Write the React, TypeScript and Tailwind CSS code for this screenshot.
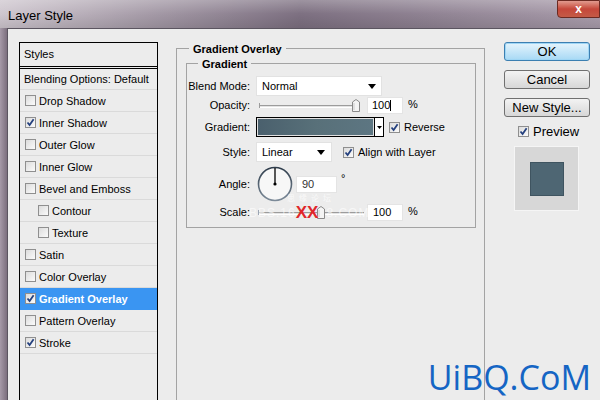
import React from "react";

const F = { fontFamily: '"Liberation Sans", Arial, sans-serif' };

function Check({ checked }: { checked?: boolean }) {
  return (
    <div className="w-[11px] h-[11px] border border-[#8f8f8f] bg-gradient-to-br from-[#dcdcdc] to-[#fbfbfb] flex items-center justify-center shrink-0">
      {checked && (
        <svg width="9" height="9" viewBox="0 0 9 9">
          <path d="M1.5 4.5 L3.6 7 L7.6 1.3" stroke="#24407e" strokeWidth="1.8" fill="none" />
        </svg>
      )}
    </div>
  );
}

function Row({ label, checked, sub, active }: { label: string; checked?: boolean; sub?: boolean; active?: boolean }) {
  return (
    <div
      className={`h-[22px] flex items-center border-b ${active ? "bg-[#3a95f2] border-[#3a95f2] text-white font-bold" : "border-[#dadada] text-black"} ${sub ? "pl-[18px]" : "pl-[5px]"}`}
    >
      <Check checked={checked} />
      <span className="ml-[3px] text-[11px] mt-[1px]">{label}</span>
    </div>
  );
}

function Arrow() {
  return (
    <svg width="8" height="5" viewBox="0 0 8 5">
      <path d="M0 0 H8 L4 5 Z" fill="#000" />
    </svg>
  );
}

function Slider({ w, thumb }: { w: number; thumb: number }) {
  return (
    <div className="relative h-full" style={{ width: w }}>
      <div className="absolute left-[3px] right-[3px] top-1/2 -mt-[1px] h-[3px] border-t border-[#9c9c9c] border-b border-b-white bg-[#e3e3e3]" />
      <div className="absolute left-[3px] top-1/2 -mt-[3px] w-[1px] h-[5px] bg-[#9c9c9c]" />
      <svg className="absolute top-1/2 -mt-[7px]" style={{ left: thumb }} width="8" height="13" viewBox="0 0 8 13">
        <path d="M0.5 3 L4 0.5 L7.5 3 V12.5 H0.5 Z" fill="#f4f4f4" stroke="#8a8a8a" />
        <path d="M2 4 V11" stroke="#ccc" />
      </svg>
    </div>
  );
}

function Btn({ children, primary }: { children: React.ReactNode; primary?: boolean }) {
  return (
    <div
      className={`h-[19px] w-[86px] rounded-[3px] border flex items-center justify-center text-[13px] ${
        primary
          ? "border-[#3c7fb1] bg-gradient-to-b from-[#e5f4fc] to-[#a7d9f5] shadow-[0_0_0_1px_#9fd6f5_inset]"
          : "border-[#707070] bg-gradient-to-b from-[#f3f3f3] to-[#d7d7d7]"
      }`}
    >
      {children}
    </div>
  );
}

export default function App() {
  const label = "w-[63px] text-right text-[11px] shrink-0";
  return (
    <div className="w-[600px] h-[400px] overflow-hidden flex flex-col bg-[#8e8390]" style={F}>
      {/* title bar */}
      <div className="h-[28px] shrink-0 flex items-start relative bg-gradient-to-r from-[#cfc7cf] via-[#7d7081] to-[#a99cab]">
        <div className="absolute inset-0 bg-gradient-to-b from-white/25 via-transparent to-black/10" />
        <span className="relative ml-[8px] mt-[6px] text-[13px] text-black">Layer Style</span>
        <div className="absolute right-0 top-0 w-[43px] h-[18px] rounded-bl-[4px] border border-[#6b2a22] bg-gradient-to-b from-[#e19a8e] via-[#c5473a] to-[#c45a46] flex items-center justify-center">
          <span className="text-white font-bold text-[12px] leading-none">x</span>
        </div>
      </div>
      <div className="flex-1 flex">
        <div className="w-[7px] shrink-0 bg-gradient-to-r from-[#a69aa8] to-[#7c6f7e]" />
        <div className="flex-1 bg-[#ececec] border-l border-t border-[#5b5560] flex relative">
          {/* left list */}
          <div className="ml-[11px] mt-[13px] w-[139px] border border-black border-b-0 flex flex-col bg-[#ececec]">
            <div className="h-[24px] flex items-center pl-[4px] text-[11px] border-b border-black">Styles</div>
            <div className="mt-[1px] border-t border-black h-[22px] flex items-center pl-[4px] text-[11px] border-b border-b-[#dadada]">
              <span className="mt-[1px]">Blending Options: Default</span>
            </div>
            <Row label="Drop Shadow" />
            <Row label="Inner Shadow" checked />
            <Row label="Outer Glow" />
            <Row label="Inner Glow" />
            <Row label="Bevel and Emboss" />
            <Row label="Contour" sub />
            <Row label="Texture" sub />
            <Row label="Satin" />
            <Row label="Color Overlay" />
            <Row label="Gradient Overlay" checked active />
            <Row label="Pattern Overlay" />
            <Row label="Stroke" checked />
          </div>

          {/* main group */}
          <div className="ml-[18px] mt-[19px] w-[309px] border border-[#a3a3a3] border-b-0 relative self-stretch">
            <span className="absolute -top-[8px] left-[12px] px-[4px] bg-[#ececec] text-[11px] font-bold">Gradient Overlay</span>
            <div className="ml-[9px] mt-[14px] w-[290px] border border-[#a3a3a3] relative pt-[12px] pb-[6px]">
              <span className="absolute -top-[8px] left-[11px] px-[4px] bg-[#ececec] text-[11px] font-bold">Gradient</span>
              {/* blend mode */}
              <div className="h-[20px] flex items-center">
                <span className={label}>Blend Mode:</span>
                <div className="ml-[6px] w-[126px] h-[20px] bg-white border border-[#e2e2e2] flex items-center justify-between pl-[5px] pr-[5px] text-[11px]">
                  <span className="mt-[1px]">Normal</span>
                  <Arrow />
                </div>
              </div>
              {/* opacity */}
              <div className="mt-[1px] h-[17px] flex items-center">
                <span className={label}>Opacity:</span>
                <div className="ml-[6px] h-full">
                  <Slider w={106} thumb={96} />
                </div>
                <div className="ml-[5px] w-[36px] h-[17px] bg-white border border-[#e4e4e4] flex items-center pl-[4px] text-[11px]">
                  100<span className="w-[1px] h-[11px] bg-black" />
                </div>
                <span className="ml-[5px] text-[11px] -mt-[3px]">%</span>
              </div>
              {/* gradient */}
              <div className="mt-[3px] h-[20px] flex items-center">
                <span className={label}>Gradient:</span>
                <div className="ml-[6px] w-[128px] h-[20px] border border-black flex">
                  <div className="flex-1 border border-[#e0e0e0] bg-gradient-to-r from-[#4a606d] via-[#587079] to-[#5d7682]" />
                  <div className="w-[9px] bg-white border-l border-black flex items-center justify-center">
                    <svg width="5" height="3" viewBox="0 0 5 3"><path d="M0 0H5L2.5 3Z" fill="#000" /></svg>
                  </div>
                </div>
                <div className="ml-[5px]"><Check checked /></div>
                <span className="ml-[4px] text-[11px]">Reverse</span>
              </div>
              {/* style */}
              <div className="mt-[5px] h-[20px] flex items-center">
                <span className={label}>Style:</span>
                <div className="ml-[6px] w-[76px] h-[20px] bg-white border border-[#e2e2e2] flex items-center justify-between pl-[5px] pr-[6px] text-[11px]">
                  <span className="mt-[1px]">Linear</span>
                  <Arrow />
                </div>
                <div className="ml-[11px]"><Check checked /></div>
                <span className="ml-[4px] text-[11px]">Align with Layer</span>
              </div>
              {/* angle */}
              <div className="mt-[4px] h-[36px] flex items-center relative">
                <span className={label}>Angle:</span>
                <svg className="ml-[7px]" width="36" height="36" viewBox="0 0 36 36">
                  <defs>
                    <linearGradient id="ring" x1="0" y1="0" x2="0" y2="1">
                      <stop offset="0" stopColor="#2f3d4c" />
                      <stop offset="1" stopColor="#7c8a98" />
                    </linearGradient>
                  </defs>
                  <circle cx="18" cy="18" r="16.5" fill="#f7f7f7" stroke="url(#ring)" strokeWidth="1.6" />
                  <line x1="18" y1="18" x2="18" y2="2" stroke="#000" strokeWidth="1.3" />
                  <circle cx="18" cy="18" r="1.6" fill="#000" />
                </svg>
                <div className="ml-[3px] w-[41px] h-[17px] bg-white border border-[#e4e4e4] flex items-center pl-[5px] text-[11px] text-[#333]">90</div>
                <span className="ml-[4px] text-[11px] self-start mt-[4px]">°</span>
                <div
                  className="absolute left-[100px] top-[28px] text-[8px] leading-none text-white/70 tracking-[4px]"
                  style={{ fontFamily: '"Noto Sans CJK SC", sans-serif' }}
                >
                  思缘论坛
                </div>
              </div>
              {/* scale */}
              <div className="mt-[2px] h-[17px] flex items-center relative">
                <span className={label}>Scale:</span>
                <div className="ml-[5px] h-full">
                  <Slider w={112} thumb={62} />
                </div>
                <div className="w-[36px] h-[17px] bg-white border border-[#e4e4e4] flex items-center pl-[5px] text-[11px]">100</div>
                <span className="ml-[5px] text-[11px] -mt-[3px]">%</span>
                <div className="absolute left-[62px] top-[0px] flex items-center leading-none">
                  <span className="text-white/60 text-[12px] tracking-[1px]">BBS.16</span>
                  <span className="text-[#e0262a] text-[17px] font-bold" style={{ fontFamily: '"Liberation Sans Narrow", "Liberation Sans", sans-serif' }}>XX</span>
                  <span className="text-white/60 text-[12px] tracking-[1px] ml-[8px]">8.COM</span>
                </div>
              </div>
            </div>
          </div>

          {/* buttons */}
          <div className="ml-[19px] mt-[13px] w-[87px] flex flex-col">
            <Btn primary>OK</Btn>
            <div className="mt-[9px]"><Btn>Cancel</Btn></div>
            <div className="mt-[9px]"><Btn>New Style...</Btn></div>
            <div className="mt-[9px] h-[11px] flex items-center pl-[14px]">
              <Check checked />
              <span className="ml-[4px] text-[13px]">Preview</span>
            </div>
            <div className="mt-[9px] ml-[10px] w-[65px] h-[65px] bg-[#d7d7d7] border border-[#f5f5f5] flex items-center justify-center">
              <div className="w-[34px] h-[34px] bg-[#4e6673] border border-[#3f5460]" />
            </div>
          </div>

          <div
            className="absolute right-[9px] bottom-[6px] text-[34px] leading-none text-[#1565c4]"
            style={{ fontFamily: '"Open Sans", sans-serif' }}
          >
            UiBQ.CoM
          </div>
        </div>
      </div>
    </div>
  );
}
